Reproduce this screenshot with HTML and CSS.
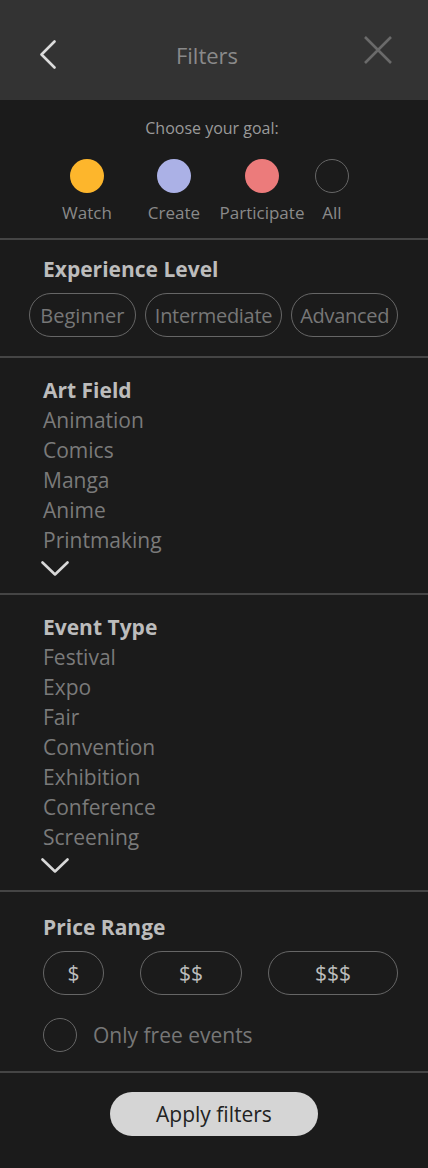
FILE: index.html
```html
<!DOCTYPE html>
<html lang="en">
<head>
<meta charset="utf-8">
<title>Filters</title>
<link rel="stylesheet" href="styles.css">
</head>
<body>
<div class="screen">
  <header class="topbar">
    <button class="icon-btn back" aria-label="Back">
      <svg width="16" height="30" viewBox="0 0 16 30"><polyline points="14.5,1.5 1.5,14.5 14.5,27.5" fill="none" stroke="#dcdcdc" stroke-width="2.6" stroke-linecap="round" stroke-linejoin="round"/></svg>
    </button>
    <h1 class="title">Filters</h1>
    <button class="icon-btn close" aria-label="Close">
      <svg width="28" height="28" viewBox="0 0 28 28"><path d="M1 1 L27 27 M27 1 L1 27" fill="none" stroke="#6a6a6a" stroke-width="2.6"/></svg>
    </button>
  </header>

  <section class="goal">
    <p class="goal-title">Choose your goal:</p>
    <div class="goal-row">
      <div class="goal-item"><span class="dot dot-watch"></span><span class="goal-label">Watch</span></div>
      <div class="goal-item"><span class="dot dot-create"></span><span class="goal-label">Create</span></div>
      <div class="goal-item"><span class="dot dot-part"></span><span class="goal-label">Participate</span></div>
      <div class="goal-item"><span class="dot dot-all"></span><span class="goal-label">All</span></div>
    </div>
  </section>

  <section class="block exp">
    <h2 class="block-title exp-title">Experience Level</h2>
    <div class="level-row">
      <span class="pill level lv-b">Beginner</span>
      <span class="pill level lv-i">Intermediate</span>
      <span class="pill level lv-a">Advanced</span>
    </div>
  </section>

  <section class="block list-block">
    <h2 class="block-title">Art Field</h2>
    <ul class="opt-list">
      <li>Animation</li>
      <li>Comics</li>
      <li>Manga</li>
      <li>Anime</li>
      <li>Printmaking</li>
    </ul>
    <svg class="more" width="28" height="15" viewBox="0 0 28 15"><polyline points="1.5,1.5 14,13.5 26.5,1.5" fill="none" stroke="#d8d8d8" stroke-width="2.6" stroke-linecap="round" stroke-linejoin="round"/></svg>
  </section>

  <section class="block list-block">
    <h2 class="block-title">Event Type</h2>
    <ul class="opt-list">
      <li>Festival</li>
      <li>Expo</li>
      <li>Fair</li>
      <li>Convention</li>
      <li>Exhibition</li>
      <li>Conference</li>
      <li>Screening</li>
    </ul>
    <svg class="more" width="28" height="15" viewBox="0 0 28 15"><polyline points="1.5,1.5 14,13.5 26.5,1.5" fill="none" stroke="#d8d8d8" stroke-width="2.6" stroke-linecap="round" stroke-linejoin="round"/></svg>
  </section>

  <section class="block price">
    <h2 class="block-title">Price Range</h2>
    <div class="price-row">
      <span class="pill price-pill p1">$</span>
      <span class="pill price-pill p2">$$</span>
      <span class="pill price-pill p3">$$$</span>
    </div>
    <label class="free">
      <span class="check"></span>
      <span class="free-text">Only free events</span>
    </label>
  </section>

  <footer class="footer">
    <button class="apply">Apply filters</button>
  </footer>
</div>
</body>
</html>
```

FILE: styles.css
```css
* { box-sizing: border-box; }

html, body {
  margin: 0;
  padding: 0;
  background: #1b1b1b;
}

body {
  font-family: "Open Sans", "Noto Sans", sans-serif;
  color: #777;
}

.screen {
  width: 428px;
  min-height: 1168px;
  background: #1b1b1b;
}

.topbar {
  height: 100px;
  background: #333333;
  display: flex;
  align-items: center;
  justify-content: space-between;
  padding: 0 36px 0 40px;
}

.icon-btn {
  background: none;
  border: 0;
  padding: 0;
  display: flex;
  cursor: pointer;
}

.back { margin-top: 10px; }

.title {
  margin: 10px 0 0 -6px;
  font-size: 22px;
  font-weight: 400;
  color: #8a8a8a;
}

/* goal */
.goal {
  height: 140px;
  border-bottom: 2px solid #454545;
  padding-top: 18px;
}

.goal-title {
  margin: 0;
  text-align: center;
  font-size: 16px;
  line-height: 20px;
  color: #9a9a9a;
  padding-right: 4px;
}

.goal-row {
  display: grid;
  grid-template-columns: 88px 86px 90px 50px;
  padding-left: 43px;
  margin-top: 21px;
}

.goal-item {
  display: flex;
  flex-direction: column;
  align-items: center;
}

.dot {
  width: 34px;
  height: 34px;
  border-radius: 50%;
}

.dot-watch { background: #fdb62c; }
.dot-create { background: #abb1e6; }
.dot-part { background: #ec7b7b; }
.dot-all { border: 1px solid #666; }

.goal-label {
  margin-top: 10px;
  font-size: 17px;
  line-height: 20px;
  color: #8a8a8a;
  white-space: nowrap;
}

/* blocks */
.block {
  border-bottom: 2px solid #454545;
  padding: 18px 30px 17px 43px;
}

.block-title {
  margin: 0;
  font-size: 21px;
  line-height: 30px;
  font-weight: 700;
  color: #bcbcbc;
}

.exp {
  height: 118px;
  padding-top: 14px;
}

.level-row {
  display: flex;
  gap: 9px;
  margin-left: -14px;
  margin-top: 9px;
}

.pill {
  height: 44px;
  border: 1px solid #666;
  border-radius: 22px;
  display: flex;
  align-items: center;
  justify-content: center;
  font-size: 21px;
  white-space: nowrap;
}

.level {
  color: #777;
  font-size: 20px;
}

.lv-b { width: 107px; }
.lv-i { width: 138px; letter-spacing: -0.3px; }
.lv-a { width: 107px; letter-spacing: -0.3px; }

.list-block {
  padding-top: 17px;
}

.opt-list {
  list-style: none;
  margin: 0;
  padding: 0;
}

.opt-list li {
  font-size: 21px;
  line-height: 30px;
  color: #7a7a7a;
}

.more {
  display: block;
  margin-top: 6px;
  margin-left: -2px;
}

/* price */
.price {
  height: 181px;
  padding-top: 20px;
}

.price-row {
  display: flex;
  justify-content: space-between;
  margin-top: 9px;
}

.price-pill {
  color: #bdbdbd;
}

.p1 { width: 61px; }
.p2 { width: 102px; margin-left: 10px; }
.p3 { width: 130px; }

.free {
  display: flex;
  align-items: center;
  gap: 16px;
  margin-top: 23px;
}

.check {
  width: 34px;
  height: 34px;
  border-radius: 50%;
  border: 1px solid #666;
}

.free-text {
  font-size: 21px;
  color: #777;
}

/* footer */
.footer {
  display: flex;
  justify-content: center;
  padding-top: 19px;
}

.apply {
  width: 208px;
  height: 44px;
  border: 0;
  border-radius: 22px;
  background: #d5d5d5;
  color: #222;
  font-family: "Open Sans", "Noto Sans", sans-serif;
  font-size: 21px;
  cursor: pointer;
}
```
